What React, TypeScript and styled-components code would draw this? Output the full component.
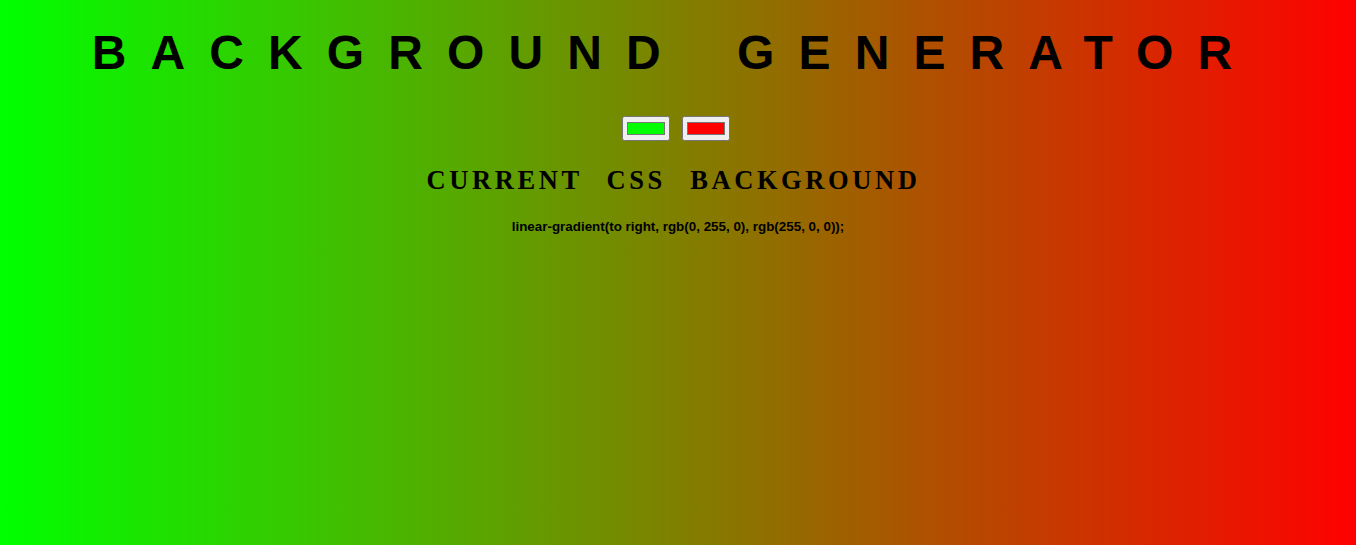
import React from "react";
import styled, { createGlobalStyle } from "styled-components";

const Global = createGlobalStyle`
  html, body { margin: 0; padding: 0; height: 100%; }
  body {
    min-height: 545px;
    background: linear-gradient(to right, rgb(0, 255, 0), rgb(255, 0, 0));
    font-family: "Liberation Sans", Arial, sans-serif;
    color: #000;
  }
`;

const Page = styled.main`
  display: flex;
  flex-direction: column;
  align-items: center;
  text-align: center;
  padding-top: 25px;
`;

const Title = styled.h1`
  margin: 0;
  padding-right: 8px;
  font-family: "Liberation Sans", Arial, sans-serif;
  font-weight: 700;
  font-size: 48px;
  line-height: 56px;
  letter-spacing: 24.1px;
  word-spacing: 15px;
`;

const Pickers = styled.div`
  display: flex;
  gap: 12px;
  margin-top: 35px;
  padding-right: 4px;
`;

const ColorInput = styled.input`
  width: 48px;
  height: 25px;
  margin: 0;
`;

const Subtitle = styled.h3`
  margin: 24px 0 0;
  padding-right: 9px;
  font-family: "Liberation Serif", "Times New Roman", serif;
  font-weight: 700;
  font-size: 26.5px;
  line-height: 30px;
  letter-spacing: 3.6px;
  word-spacing: 14px;
`;

const Code = styled.p`
  margin: 24px 0 0;
  font-family: "Liberation Sans", Arial, sans-serif;
  font-weight: 700;
  font-size: 13.4px;
  line-height: 16px;
`;

export default function App() {
  return (
    <>
      <Global />
      <Page>
        <Title>BACKGROUND GENERATOR</Title>
        <Pickers>
          <ColorInput type="color" defaultValue="#00ff00" />
          <ColorInput type="color" defaultValue="#ff0000" />
        </Pickers>
        <Subtitle>CURRENT CSS BACKGROUND</Subtitle>
        <Code>linear-gradient(to right, rgb(0, 255, 0), rgb(255, 0, 0));</Code>
      </Page>
    </>
  );
}
